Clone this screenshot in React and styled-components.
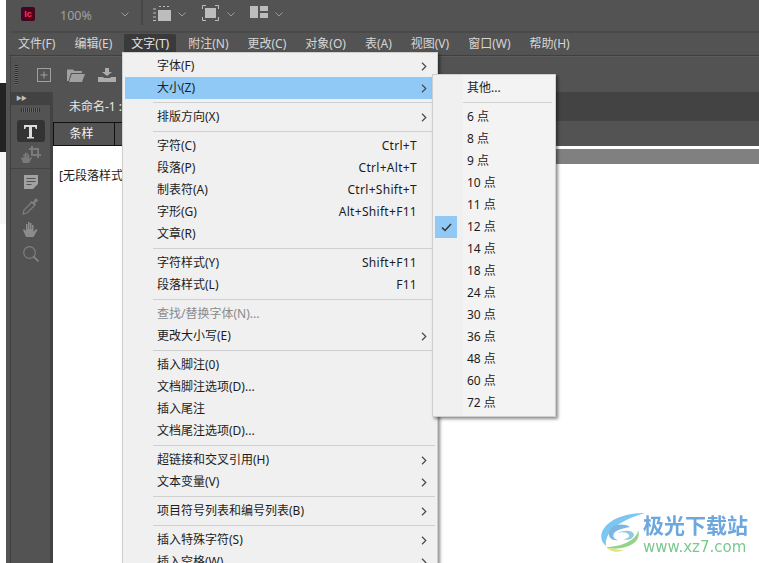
import React from "react";
import styled, { createGlobalStyle } from "styled-components";

const Global = createGlobalStyle`
  html, body { margin: 0; padding: 0; background: #fff; }
  body { font-family: "Noto Sans", "Noto Sans CJK SC", sans-serif; font-size: 12px; }
`;

const Page = styled.div`
  position: relative;
  width: 759px;
  height: 563px;
  overflow: hidden;
  display: flex;
  background: #fff;
`;

const LeftEdge = styled.div`
  width: 6px;
  flex: none;
  display: flex;
  flex-direction: column;
`;
const EdgePart = styled.div`
  height: ${p => p.$h}px;
  background: ${p => p.$c};
  flex: none;
`;

const Window = styled.div`
  flex: 1;
  min-width: 0;
  display: flex;
  flex-direction: column;
  background: #535353;
`;

const TitleBar = styled.div`
  height: 31px;
  flex: none;
  display: flex;
  align-items: flex-start;
  border-bottom: 2px solid #4a4a4a;
  margin-left: 4px;
  box-sizing: content-box;
`;
const AppIcon = styled.span`
  width: 14px;
  height: 14px;
  margin: 7px 0 0 11px;
  background: #49021f;
  border-radius: 2px;
  color: #ff3366;
  font: 700 9px/14px "Liberation Sans", sans-serif;
  text-align: center;
  flex: none;
`;
const Zoom = styled.span`
  margin: 7px 0 0 25px;
  width: 61px;
  color: #a0a0a0;
  font: 12.5px/18px "Noto Sans", sans-serif;
  flex: none;
`;
const Caret = styled.svg`
  width: 8px;
  height: 5px;
  margin-top: ${p => p.$top || 12}px;
  flex: none;
`;
const TitleDivider = styled.div`
  width: 2px;
  height: 25px;
  background: #474747;
  margin: 0 9px 0 12px;
  flex: none;
`;
const TopIcon = styled.svg`
  margin-top: 5px;
  margin-right: ${p => p.$mr}px;
  margin-left: ${p => p.$ml || 0}px;
  flex: none;
`;

const MenuBar = styled.div`
  height: 22px;
  flex: none;
  display: flex;
  align-items: flex-start;
  border-bottom: 1px solid #3f3f3f;
  margin-left: 2.5px;
`;
const MenuTitle = styled.div`
  height: 18px;
  padding: 0 ${p => p.$active ? 7 : 9.5}px;
  margin: 1px ${p => p.$active ? 2.5 : 0}px 0;
  line-height: 20px;
  color: ${p => p.$active ? "#e4e4e4" : "#d6d6d6"};
  background: ${p => p.$active ? "#3a3a3a" : "transparent"};
  border-radius: 2px 2px 0 0;
  white-space: nowrap;
`;

const ControlBar = styled.div`
  height: 36px;
  flex: none;
  display: flex;
  align-items: center;
  margin-left: 4px;
  border-left: 1px solid #444;
  border-top: 1px solid #5b5b5b;
  box-sizing: border-box;
`;
const GripV = styled.div`
  width: 3px;
  height: 20px;
  margin: 0 19px 0 4px;
  background: repeating-linear-gradient(180deg, #2f2f2f 0 1px, #666 1px 2px);
`;
const BarIcon = styled.svg`
  margin-right: ${p => p.$mr}px;
  flex: none;
`;

const Workspace = styled.div`
  flex: 1;
  min-height: 0;
  display: flex;
  padding-left: 4px;
`;

const ToolPanel = styled.div`
  width: 39px;
  flex: none;
  border-left: 1px solid #3f3f3f;
  border-right: 3px solid #434343;
  display: flex;
  flex-direction: column;
  align-items: center;
  box-sizing: content-box;
`;
const ToolHead = styled.div`
  align-self: stretch;
  height: 13px;
  background: #424242;
  color: #bdbdbd;
  font-size: 6px;
  line-height: 13px;
  padding-left: 5px;
  letter-spacing: -1px;
  margin-bottom: 3px;
`;
const GripH = styled.div`
  width: 19px;
  height: 4px;
  margin-bottom: 8px;
  background: repeating-linear-gradient(90deg, #2f2f2f 0 1px, #6a6a6a 1px 2px);
`;
const ToolActive = styled.div`
  width: 28px;
  height: 22px;
  border-radius: 3px;
  background: #333;
  display: flex;
  align-items: center;
  justify-content: center;
  margin-bottom: 4px;
`;
const ToolGlyph = styled.svg`
  display: block;
  flex: none;
  margin-bottom: ${p => p.$mb}px;
`;
const ToolRule = styled.div`
  align-self: stretch;
  height: 1px;
  background: #444;
  margin-bottom: 6px;
`;

const DocArea = styled.div`
  flex: 1;
  min-width: 0;
  display: flex;
  flex-direction: column;
`;
const TabStrip = styled.div`
  height: 29px;
  flex: none;
  display: flex;
  background: #434343;
`;
const DocTab = styled.div`
  width: 300px;
  padding-left: 16px;
  box-sizing: border-box;
  background: #535353;
  color: #e8e8e8;
  line-height: 30px;
`;
const StoryBar = styled.div`
  height: 25px;
  flex: none;
  display: flex;
  align-items: flex-end;
  background: #535353;
`;
const StoryTab = styled.div`
  width: ${p => p.$w}px;
  height: 24px;
  box-sizing: border-box;
  border: 1px solid #111;
  border-left-width: ${p => p.$first ? 1 : 0}px;
  color: #f4f4f4;
  padding-right: 5px;
  text-align: center;
  line-height: 22px;
  background: #535353;
`;
const StoryBody = styled.div`
  flex: 1;
  display: flex;
  background: #fff;
`;
const StyleColumn = styled.div`
  width: 80px;
  flex: none;
  padding: 20px 0 0 6px;
  box-sizing: border-box;
  color: #222;
  white-space: nowrap;
  overflow: hidden;
`;
const TextColumn = styled.div`
  flex: 1;
`;
const Ruler = styled.div`
  height: 15px;
  margin-top: 3px;
  background: #808080;
`;

const Menu = styled.div`
  position: absolute;
  left: 122px;
  top: 52px;
  width: 316px;
  height: 530px;
  box-sizing: border-box;
  padding: 2px 2px;
  background: #f0f0f0;
  border: 1px solid #cfcfcf;
  box-shadow: 2px 2px 3px rgba(0,0,0,.45);
  color: #1c1c1c;
`;
const Item = styled.div`
  height: 22px;
  display: flex;
  align-items: center;
  padding-left: 32px;
  line-height: 22px;
  color: ${p => p.$off ? "#8a8a8a" : "#1c1c1c"};
  background: ${p => p.$hot ? "#90c8f6" : "transparent"};
  white-space: nowrap;
`;
const Shortcut = styled.span`
  margin-left: auto;
  margin-right: 18px;
  letter-spacing: 0.3px;
`;
const Arrow = styled.svg`
  margin-left: auto;
  margin-right: 8px;
  width: 6px;
  height: 9px;
  flex: none;
`;
const Sep = styled.div`
  height: 7px;
  margin-left: 28px;
  display: flex;
  align-items: center;
  &::before { content: ""; flex: 1; height: 1px; background: #d0d0d0; }
`;

const SubMenu = styled.div`
  position: absolute;
  left: 432px;
  top: 74px;
  width: 124px;
  height: 343px;
  box-sizing: border-box;
  padding: 2px 0;
  background: linear-gradient(90deg, #f0f0f0 30px, #f3f3f3 30px);
  border: 1px solid #cfcfcf;
  box-shadow: 2px 2px 3px rgba(0,0,0,.45);
`;
const SubItem = styled.div`
  height: 22px;
  display: flex;
  align-items: center;
  padding-left: 2px;
  color: #1c1c1c;
  line-height: 22px;
`;
const CheckCell = styled.span`
  width: 22px;
  height: 22px;
  margin-right: 10px;
  flex: none;
  display: flex;
  align-items: center;
  justify-content: center;
  background: ${p => p.$on ? "#90c8f6" : "transparent"};
`;
const SubSep = styled.div`
  height: 7px;
  margin: 0 3px 0 30px;
  display: flex;
  align-items: center;
  &::before { content: ""; flex: 1; height: 1px; background: #d0d0d0; }
`;

const Watermark = styled.div`
  position: absolute;
  left: 600px;
  top: 512px;
  width: 155px;
  height: 44px;
  display: flex;
  filter: blur(0.3px);
`;
const WmText = styled.div`
  margin-left: -3px;
  display: flex;
  flex-direction: column;
  align-items: flex-start;
`;
const WmTitle = styled.span`
  color: #6ca7de;
  font: 700 21px/24px "Noto Sans CJK SC", sans-serif;
  white-space: nowrap;
`;
const WmUrl = styled.span`
  color: #79c98f;
  font: 15px/15px "DejaVu Sans", sans-serif;
  margin: 4px 0 0 0;
  white-space: nowrap;
`;

const CaretIcon = ({ top }) => (
  <Caret $top={top} viewBox="0 0 8 5">
    <path d="M.5.5 4 4 7.5.5" fill="none" stroke="#9a9a9a" strokeWidth="1" />
  </Caret>
);
const ChevronIcon = () => (
  <Arrow viewBox="0 0 6 9">
    <path d="M1 .8 4.800 4.500 1 8.200" fill="none" stroke="#4a4a4a" strokeWidth="1.200" />
  </Arrow>
);

const menuTitles = ["文件(F)", "编辑(E)", "文字(T)", "附注(N)", "更改(C)", "对象(O)", "表(A)", "视图(V)", "窗口(W)", "帮助(H)"];

const menuRows = [
  { t: "字体(F)", a: 1 },
  { t: "大小(Z)", a: 1, hot: 1 },
  "-",
  { t: "排版方向(X)", a: 1 },
  "-",
  { t: "字符(C)", s: "Ctrl+T" },
  { t: "段落(P)", s: "Ctrl+Alt+T" },
  { t: "制表符(A)", s: "Ctrl+Shift+T" },
  { t: "字形(G)", s: "Alt+Shift+F11" },
  { t: "文章(R)" },
  "-",
  { t: "字符样式(Y)", s: "Shift+F11" },
  { t: "段落样式(L)", s: "F11" },
  "-",
  { t: "查找/替换字体(N)...", off: 1 },
  { t: "更改大小写(E)", a: 1 },
  "-",
  { t: "插入脚注(0)" },
  { t: "文档脚注选项(D)..." },
  { t: "插入尾注" },
  { t: "文档尾注选项(D)..." },
  "-",
  { t: "超链接和交叉引用(H)", a: 1 },
  { t: "文本变量(V)", a: 1 },
  "-",
  { t: "项目符号列表和编号列表(B)", a: 1 },
  "-",
  { t: "插入特殊字符(S)", a: 1 },
  { t: "插入空格(W)", a: 1 },
];

const sizes = [6, 8, 9, 10, 11, 12, 14, 18, 24, 30, 36, 48, 60, 72];

export default function App() {
  return (
    <Page>
      <Global />
      <LeftEdge>
        <EdgePart $h={83} $c="#ffffff" />
        <EdgePart $h={69} $c="#232323" />
        <EdgePart $h={72} $c="#f6f6f6" />
      </LeftEdge>
      <Window>
        <TitleBar>
          <AppIcon>Ic</AppIcon>
          <Zoom>100%</Zoom>
          <CaretIcon />
          <TitleDivider />
          <TopIcon $mr={6} width="20" height="16" viewBox="0 0 20 16">
            <rect x="6" y="5" width="13" height="11" fill="#bdbdbd" />
            <path d="M1 4h3M1 8h3M1 12h3M1 15.500h3M7 1.500h2M11 1.500h2M15 1.500h2" stroke="#bdbdbd" strokeWidth="1.200" fill="none" />
          </TopIcon>
          <CaretIcon />
          <TopIcon $mr={8} $ml={16} width="17" height="16" viewBox="0 0 17 16">
            <rect x="3" y="3" width="11" height="10" fill="#bdbdbd" />
            <path d="M.5 4V.5H4M13 .5h3.500V4M.5 12v3.500H4M13 15.500h3.500V12" stroke="#bdbdbd" fill="none" />
          </TopIcon>
          <CaretIcon />
          <TopIcon $mr={7} $ml={15} width="18" height="14" viewBox="0 0 18 14">
            <rect x="0" y="1" width="8" height="12" fill="#bdbdbd" />
            <rect x="10" y="1" width="8" height="5" fill="#bdbdbd" />
            <rect x="10" y="8" width="8" height="5" fill="#bdbdbd" />
          </TopIcon>
          <CaretIcon />
        </TitleBar>
        <MenuBar>
          {menuTitles.map((m, i) => (
            <MenuTitle key={m} $active={i === 2}>{m}</MenuTitle>
          ))}
        </MenuBar>
        <ControlBar>
          <GripV />
          <BarIcon $mr={16} width="14" height="14" viewBox="0 0 14 14">
            <rect x=".5" y=".5" width="13" height="13" fill="none" stroke="#a0a0a0" />
            <path d="M7 3.500v7M3.500 7h7" stroke="#a0a0a0" fill="none" />
          </BarIcon>
          <BarIcon $mr={13} width="18" height="14" viewBox="0 0 18 14">
            <path d="M0 1.500h6l1.500 1.500H15v2H4L1.500 13H0z" fill="#a0a0a0" />
            <path d="M4.800 6H18l-3 8H2z" fill="#a0a0a0" />
          </BarIcon>
          <BarIcon $mr={0} width="18" height="14" viewBox="0 0 18 14">
            <path d="M7 0h4v4h3L9 8 4 4h3z" fill="#acacac" />
            <path d="M0 9h5l1 1h6l1-1h5v5H0z" fill="#acacac" />
          </BarIcon>
        </ControlBar>
        <Workspace>
          <ToolPanel>
            <ToolHead>▶▶</ToolHead>
            <GripH />
            <ToolActive>
              <svg width="15" height="15" viewBox="0 0 15 15">
                <path d="M1 1h13v4h-1.200L12 3H9v10h2v1.500H4V13h2V3H3L2.200 5H1z" fill="#dcdcdc" />
              </svg>
            </ToolActive>
            <ToolGlyph $mb={5} width="20" height="17" viewBox="0 0 20 17">
              <path d="M11 0v9h9M8 3h9v9" fill="none" stroke="#7a7a7a" strokeWidth="2" />
              <path d="M2 17 0 12l1-.8 1.500 1.300V8h1.200v3.500H4V6.500h1.200v5h.3V7h1.200v4.500H7V8.500h1.200v4.500L10 11l1 .8L8 17z" fill="#7a7a7a" />
            </ToolGlyph>
            <ToolRule />
            <ToolGlyph $mb={9} width="14" height="14" viewBox="0 0 14 14">
              <path d="M0 0h14v9l-5 5H0z" fill="#a2a2a2" />
              <path d="M2.500 3.500h9M2.500 6.500h9M2.500 9.500h5" stroke="#535353" strokeWidth="1.200" fill="none" />
            </ToolGlyph>
            <ToolGlyph $mb={6} width="17" height="17" viewBox="0 0 17 17">
              <path d="M10 4 2 12l-1 4 4-1 8-8" fill="none" stroke="#7f7f7f" strokeWidth="1.200" />
              <path d="M9 3l2 1 2-3c1-1 3 0 3 2l-3 2 1 2-1 1-5-4z" fill="#7f7f7f" />
            </ToolGlyph>
            <ToolGlyph $mb={9} width="15" height="16" viewBox="0 0 15 16">
              <path d="M3 16 0 9l1-1 2 2V3h1.500v5H5V1h1.500v7H7V2h1.500v6H9V4h1.500v7L13 8l1.500 1-4 7z" fill="#8c8c8c" />
            </ToolGlyph>
            <ToolGlyph $mb={0} width="16" height="16" viewBox="0 0 16 16">
              <circle cx="6.500" cy="6.500" r="5.800" fill="none" stroke="#7f7f7f" strokeWidth="1.200" />
              <path d="M10.500 10.500 15.500 15.500" stroke="#7f7f7f" strokeWidth="2" />
            </ToolGlyph>
          </ToolPanel>
          <DocArea>
            <TabStrip>
              <DocTab>未命名-1 :</DocTab>
            </TabStrip>
            <StoryBar>
              <StoryTab $w={62} $first>条样</StoryTab>
              <StoryTab $w={120} />
            </StoryBar>
            <StoryBody>
              <StyleColumn>[无段落样式</StyleColumn>
              <TextColumn>
                <Ruler />
              </TextColumn>
            </StoryBody>
          </DocArea>
        </Workspace>
      </Window>

      <Menu>
        {menuRows.map((r, i) =>
          r === "-" ? <Sep key={i} /> : (
            <Item key={i} $hot={r.hot} $off={r.off}>
              {r.t}
              {r.s && <Shortcut>{r.s}</Shortcut>}
              {r.a && <ChevronIcon />}
            </Item>
          )
        )}
      </Menu>

      <SubMenu>
        <SubItem>
          <CheckCell />
          其他...
        </SubItem>
        <SubSep />
        {sizes.map(s => (
          <SubItem key={s}>
            <CheckCell $on={s === 12}>
              {s === 12 && (
                <svg width="11" height="9" viewBox="0 0 11 9">
                  <path d="M1 4.500 4 7.500 10 1" fill="none" stroke="#333" strokeWidth="1.500" />
                </svg>
              )}
            </CheckCell>
            {s} 点
          </SubItem>
        ))}
      </SubMenu>

      <Watermark>
        <svg width="46" height="42" viewBox="0 0 46 42">
          <path d="M45 1C28 1 8 6 2 20c-2 6 0 11 4 14C4 20 20 8 45 1z" fill="#7cc6f2" />
          <path d="M30 15C22 10 10 13 9 21c-1 5 4 8 9 7-5-1-6-5-3-8 4-3 10-4 15-5z" fill="#7db6e4" />
          <path d="M16 22c5-3 12-2 13 1 1 2-2 4-6 4 5 2 10 0 11-4 0-5-11-6-18-1z" fill="#8fcbe0" />
          <path d="M6 35c6 3 20 2 28-4 4-3 6-8 4-13 0 8-14 17-32 17z" fill="#95d488" />
          <path d="M6 35c4 5 12 6 18 3-6 0-12-1-18-3z" fill="#dbe57c" />
        </svg>
        <WmText>
          <WmTitle>极光下载站</WmTitle>
          <WmUrl>www.xz7.com</WmUrl>
        </WmText>
      </Watermark>
    </Page>
  );
}
